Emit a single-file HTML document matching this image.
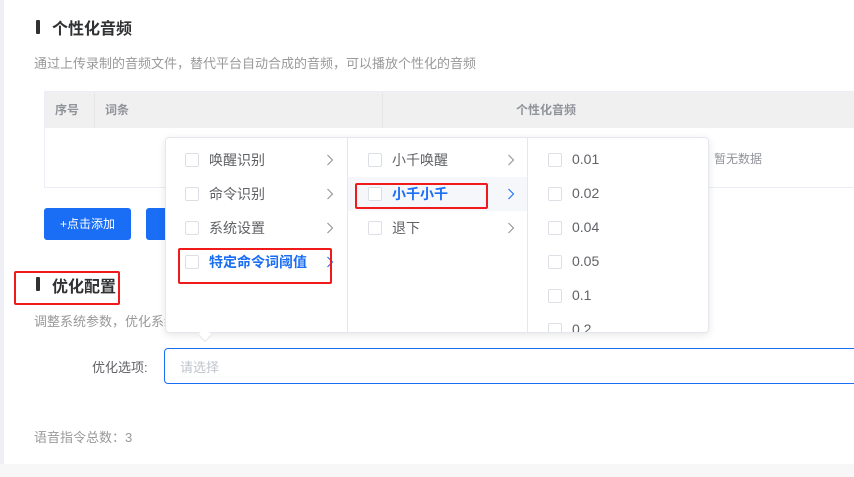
<!DOCTYPE html>
<html><head><meta charset="utf-8"><style>
*{margin:0;padding:0;box-sizing:border-box}
body{width:854px;height:477px;overflow:hidden;background:#fff;font-family:"Liberation Sans","Noto Sans CJK SC",sans-serif;position:relative;color:#606266}
.a{position:absolute}
.bar{position:absolute;width:4px;height:14px;background:#303133;border-radius:1px}
.cb{position:absolute;width:14px;height:14px;border:1px solid #dcdfe6;border-radius:2px;background:#fff}
.it{position:absolute;font-size:14px;color:#606266;white-space:nowrap}
.arr{position:absolute;width:8px;height:12px}
.red{position:absolute;border:2px solid #f01a1a;border-radius:2px}
</style></head><body>
<div class="a" style="left:0;top:0;width:4px;height:464px;background:#eef0f5"></div>
<div class="a" style="left:0;top:464px;width:854px;height:13px;background:#f7f7f8"></div>

<div class="bar" style="left:36px;top:20px"></div>
<div class="a" style="left:52px;top:15px;font-size:16px;font-weight:bold;color:#303133">个性化音频</div>
<div class="a" style="left:34px;top:53px;font-size:13px;color:#999">通过上传录制的音频文件，替代平台自动合成的音频，可以播放个性化的音频</div>

<div class="a" style="left:44px;top:91px;width:820px;height:97px;border:1px solid #ebeef5"></div>
<div class="a" style="left:45px;top:92px;width:820px;height:36px;background:#f0f0f0"></div>
<div class="a" style="left:94px;top:92px;width:1px;height:36px;background:#e6e6e6"></div>
<div class="a" style="left:382px;top:92px;width:1px;height:36px;background:#e6e6e6"></div>
<div class="a" style="left:55px;top:101px;font-size:12px;color:#909399;font-weight:bold">序号</div>
<div class="a" style="left:105px;top:101px;font-size:12px;color:#909399;font-weight:bold">词条</div>
<div class="a" style="left:516px;top:101px;font-size:12px;color:#909399;font-weight:bold">个性化音频</div>
<div class="a" style="left:714px;top:150px;font-size:12px;color:#909399">暂无数据</div>

<div class="a" style="left:44px;top:208px;width:87px;height:32px;background:#1a6ef5;border-radius:3px;color:#fff;font-size:12px;text-align:center;line-height:32px">+点击添加</div>
<div class="a" style="left:146px;top:208px;width:40px;height:32px;background:#1a6ef5;border-radius:3px"></div>

<div class="bar" style="left:36px;top:277px"></div>
<div class="a" style="left:52px;top:273px;font-size:16px;font-weight:bold;color:#303133">优化配置</div>
<div class="a" style="left:34px;top:311px;font-size:13px;color:#999">调整系统参数，优化系统</div>
<div class="a" style="left:92px;top:357px;font-size:13px;color:#606266">优化选项:</div>
<div class="a" style="left:164px;top:348px;width:700px;height:36px;border:1px solid #1a6ef5;border-radius:4px"></div>
<div class="a" style="left:180px;top:357px;font-size:13px;color:#c0c4cc">请选择</div>
<div class="a" style="left:34px;top:427px;font-size:13px;color:#999">语音指令总数：3</div>

<!-- dropdown -->
<div class="a" style="left:165px;top:137px;width:544px;height:196px;background:#fff;border:1px solid #e4e7ed;border-radius:4px;box-shadow:0 2px 8px rgba(0,0,0,.1)"></div>
<div class="a" style="left:200px;top:330px;width:10px;height:10px;background:#fff;transform:rotate(45deg);border-right:1px solid #e4e7ed;border-bottom:1px solid #e4e7ed"></div>
<div class="a" style="left:347px;top:138px;width:1px;height:194px;background:#e4e7ed"></div>
<div class="a" style="left:527px;top:138px;width:1px;height:194px;background:#e4e7ed"></div>
<div class="a" style="left:348px;top:177px;width:179px;height:34px;background:#f5f7fa"></div>

<svg width="0" height="0" style="position:absolute"><defs><path id="ch" d="M1.5 1 L6.5 6 L1.5 11" fill="none" stroke-width="1.1"/></defs></svg>

<div class="cb" style="left:185px;top:153px"></div><div class="it" style="left:209px;top:150px">唤醒识别</div><svg class="arr" style="left:326px;top:154px"><use href="#ch" stroke="#909399"/></svg>
<div class="cb" style="left:185px;top:187px"></div><div class="it" style="left:209px;top:184px">命令识别</div><svg class="arr" style="left:326px;top:188px"><use href="#ch" stroke="#909399"/></svg>
<div class="cb" style="left:185px;top:221px"></div><div class="it" style="left:209px;top:218px">系统设置</div><svg class="arr" style="left:326px;top:222px"><use href="#ch" stroke="#909399"/></svg>
<div class="cb" style="left:185px;top:255px"></div><div class="it" style="left:209px;top:252px;color:#1a6ef5;font-weight:bold">特定命令词阈值</div><svg class="arr" style="left:326px;top:256px"><use href="#ch" stroke="#1a6ef5"/></svg>

<div class="cb" style="left:368px;top:153px"></div><div class="it" style="left:392px;top:150px">小千唤醒</div><svg class="arr" style="left:507px;top:154px"><use href="#ch" stroke="#909399"/></svg>
<div class="cb" style="left:368px;top:187px"></div><div class="it" style="left:392px;top:184px;color:#1a6ef5;font-weight:bold">小千小千</div><svg class="arr" style="left:507px;top:188px"><use href="#ch" stroke="#1a6ef5"/></svg>
<div class="cb" style="left:368px;top:221px"></div><div class="it" style="left:392px;top:218px">退下</div><svg class="arr" style="left:507px;top:222px"><use href="#ch" stroke="#909399"/></svg>

<div class="cb" style="left:548px;top:153px"></div><div class="it" style="left:572px;top:151px">0.01</div>
<div class="cb" style="left:548px;top:187px"></div><div class="it" style="left:572px;top:185px">0.02</div>
<div class="cb" style="left:548px;top:221px"></div><div class="it" style="left:572px;top:219px">0.04</div>
<div class="cb" style="left:548px;top:255px"></div><div class="it" style="left:572px;top:253px">0.05</div>
<div class="cb" style="left:548px;top:289px"></div><div class="it" style="left:572px;top:287px">0.1</div>
<div class="a" style="left:528px;top:318px;width:180px;height:14px;overflow:hidden"><div class="cb" style="left:20px;top:5px"></div><div class="it" style="left:44px;top:3px">0.2</div></div>

<div class="red" style="left:14px;top:271px;width:106px;height:34px"></div>
<div class="red" style="left:178px;top:248px;width:154px;height:36px"></div>
<div class="red" style="left:355px;top:183px;width:133px;height:26px"></div>
</body></html>
